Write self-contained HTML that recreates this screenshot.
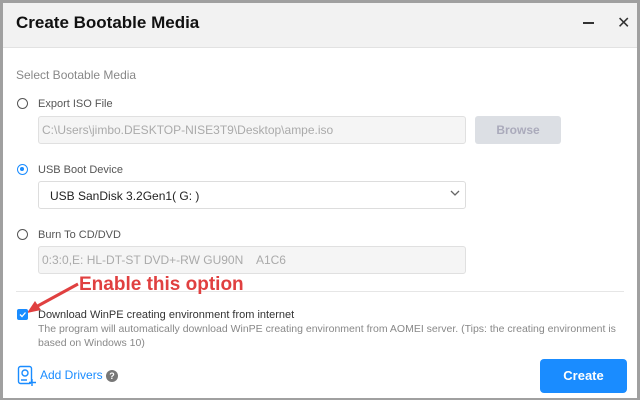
<!DOCTYPE html>
<html><head><style>
*{margin:0;padding:0;box-sizing:border-box}
body{width:640px;height:400px;overflow:hidden;font-family:"Liberation Sans",sans-serif;background:#fff;position:relative}
.frame{position:absolute;left:0;top:0;width:640px;height:400px;border:3px solid #a0a0a0;border-bottom-width:2px}
.title{position:absolute;left:3px;top:3px;width:634px;height:45px;background:#f2f2f2;border-bottom:1px solid #e2e2e2}
.t{position:absolute;font-size:17px;font-weight:bold;color:#111;left:13px;top:10px}
.abs{position:absolute}
.lbl{font-size:11px;color:#555}
.radio{position:absolute;width:11px;height:11px;border:1.5px solid #555;border-radius:50%}
.box{position:absolute;background:#f5f5f5;border:1px solid #e0e0e0;border-radius:3px;font-size:12px;color:#aaa;padding-left:3px;line-height:27px}
</style></head><body>
<div class="title"><div class="t">Create Bootable Media</div>
<div class="abs" style="left:580px;top:19px;width:11px;height:2px;background:#333"></div>
<div class="abs" style="left:614px;top:10px;font-size:16px;color:#333">✕</div>
</div>
<div class="abs" style="left:16px;top:68px;font-size:12px;color:#888">Select Bootable Media</div>
<div class="radio" style="left:17px;top:98px"></div>
<div class="abs lbl" style="left:38px;top:98px">Export ISO File</div>
<div class="box" style="left:38px;top:116px;width:428px;height:28px">C:\Users\jimbo.DESKTOP-NISE3T9\Desktop\ampe.iso</div>
<div class="abs" style="left:475px;top:116px;width:86px;height:28px;background:#dcdfe4;border-radius:3px;color:#aab;font-size:12px;font-weight:bold;text-align:center;line-height:28px">Browse</div>
<div class="radio" style="left:17px;top:164px;border-color:#1a8cff"><div style="position:absolute;left:2px;top:2px;width:4px;height:4px;border-radius:50%;background:#1a8cff"></div></div>
<div class="abs lbl" style="left:38px;top:164px">USB Boot Device</div>
<div class="abs" style="left:38px;top:181px;width:428px;height:28px;border:1px solid #ddd;border-radius:3px;font-size:12px;color:#222;line-height:28px;padding-left:11px">USB SanDisk 3.2Gen1( G: )</div>
<svg class="abs" style="left:450px;top:189px" width="10" height="8"><path d="M1 2l4 4 4-4" stroke="#666" stroke-width="1.3" fill="none"/></svg>
<div class="radio" style="left:17px;top:229px"></div>
<div class="abs lbl" style="left:38px;top:229px">Burn To CD/DVD</div>
<div class="box" style="left:38px;top:246px;width:428px;height:28px">0:3:0,E: HL-DT-ST DVD+-RW GU90N &nbsp;&nbsp; A1C6</div>
<div class="abs" style="left:16px;top:291px;width:608px;height:1px;background:#e6e6e6"></div>
<div class="abs" style="left:79px;top:274px;font-size:19px;font-weight:bold;color:#e04040">Enable this option</div>
<svg class="abs" style="left:24px;top:280px" width="60" height="40"><path d="M54 4L10 28" stroke="#e04040" stroke-width="3"/><path d="M3 33l14-3-6-9z" fill="#e04040"/></svg>
<div class="abs" style="left:17px;top:309px;width:11px;height:11px;background:#1a8cff;border-radius:2px"><svg width="11" height="11" style="display:block"><path d="M3 5.5l2 2 3.5-4" stroke="#fff" stroke-width="1.3" fill="none"/></svg></div>
<div class="abs" style="left:38px;top:309px;font-size:11px;color:#333">Download WinPE creating environment from internet</div>
<div class="abs" style="left:38px;top:322px;width:590px;font-size:10.5px;color:#888;line-height:14px">The program will automatically download WinPE creating environment from AOMEI server. (Tips: the creating environment is based on Windows 10)</div>
<svg class="abs" style="left:17px;top:365px" width="20" height="22"><rect x="1.5" y="1.5" width="13" height="17" rx="2" fill="none" stroke="#1a8cff" stroke-width="1.4"/><circle cx="8" cy="8" r="3" fill="none" stroke="#1a8cff" stroke-width="1.4"/><path d="M4 15h6M15 14v7M12 17.5h7" stroke="#1a8cff" stroke-width="1.4"/></svg>
<div class="abs" style="left:40px;top:368px;font-size:12px;color:#1a8cff">Add Drivers</div>
<div class="abs" style="left:106px;top:370px;width:12px;height:12px;border-radius:50%;background:#777;color:#fff;font-size:9px;font-weight:bold;text-align:center;line-height:12px">?</div>
<div class="abs" style="left:540px;top:359px;width:87px;height:34px;background:#1a8cff;border-radius:4px;color:#fff;font-size:13px;font-weight:bold;text-align:center;line-height:34px">Create</div>
<div class="frame"></div>
</body></html>
